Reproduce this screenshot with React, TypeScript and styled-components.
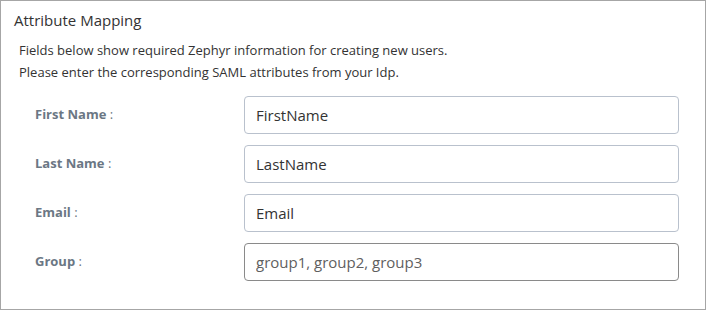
import React from "react";
import styled, { createGlobalStyle } from "styled-components";

const GlobalStyle = createGlobalStyle`
  body {
    margin: 0;
    background: #ffffff;
    font-family: "Open Sans", "Liberation Sans", sans-serif;
  }
`;

const Panel = styled.section`
  width: 706px;
  height: 310px;
  box-sizing: border-box;
  border: 1px solid #a6a6a6;
  background: #fff;
  color: #333;
`;

const Title = styled.h3`
  margin: 0;
  padding: 8px 13px 0;
  font-size: 15px;
  font-weight: 400;
  line-height: 22px;
  color: #333;
`;

const Intro = styled.p`
  margin: 8px 0 0;
  padding-left: 18px;
  font-size: 13px;
  line-height: 22px;
  color: #333;
`;

const Fields = styled.div`
  display: grid;
  grid-template-columns: 209px 435px;
  row-gap: 11px;
  margin-top: 13px;
  padding-left: 34px;
  align-items: center;
`;

const Label = styled.label`
  font-size: 13px;
  font-weight: 700;
  color: #6b7784;
  padding-bottom: 3px;
`;

const Colon = styled.span`
  font-weight: 400;
`;

const Input = styled.input<{ $muted?: boolean }>`
  box-sizing: border-box;
  width: 435px;
  height: 38px;
  padding: 0 11px;
  border: 1px solid ${(p) => (p.$muted ? "#8a8a8a" : "#b9c1cd")};
  border-radius: 4px;
  font-family: "Open Sans", "Liberation Sans", sans-serif;
  font-size: 15px;
  color: #333;
  background: #fff;
  outline: none;

  &::placeholder {
    color: #5f5f5f;
  }
`;

type Field = { label: string; value?: string; placeholder?: string };

const fields: Field[] = [
  { label: "First Name", value: "FirstName" },
  { label: "Last Name", value: "LastName" },
  { label: "Email", value: "Email" },
  { label: "Group", placeholder: "group1, group2, group3" },
];

export default function App() {
  return (
    <>
      <GlobalStyle />
      <Panel>
        <Title>Attribute Mapping</Title>
        <Intro>
          Fields below show required Zephyr information for creating new users.
          <br />
          Please enter the corresponding SAML attributes from your Idp.
        </Intro>
        <Fields>
          {fields.map((f) => (
            <React.Fragment key={f.label}>
              <Label>
                {f.label} <Colon>:</Colon>
              </Label>
              <Input
                defaultValue={f.value}
                placeholder={f.placeholder}
                $muted={!f.value}
              />
            </React.Fragment>
          ))}
        </Fields>
      </Panel>
    </>
  );
}
